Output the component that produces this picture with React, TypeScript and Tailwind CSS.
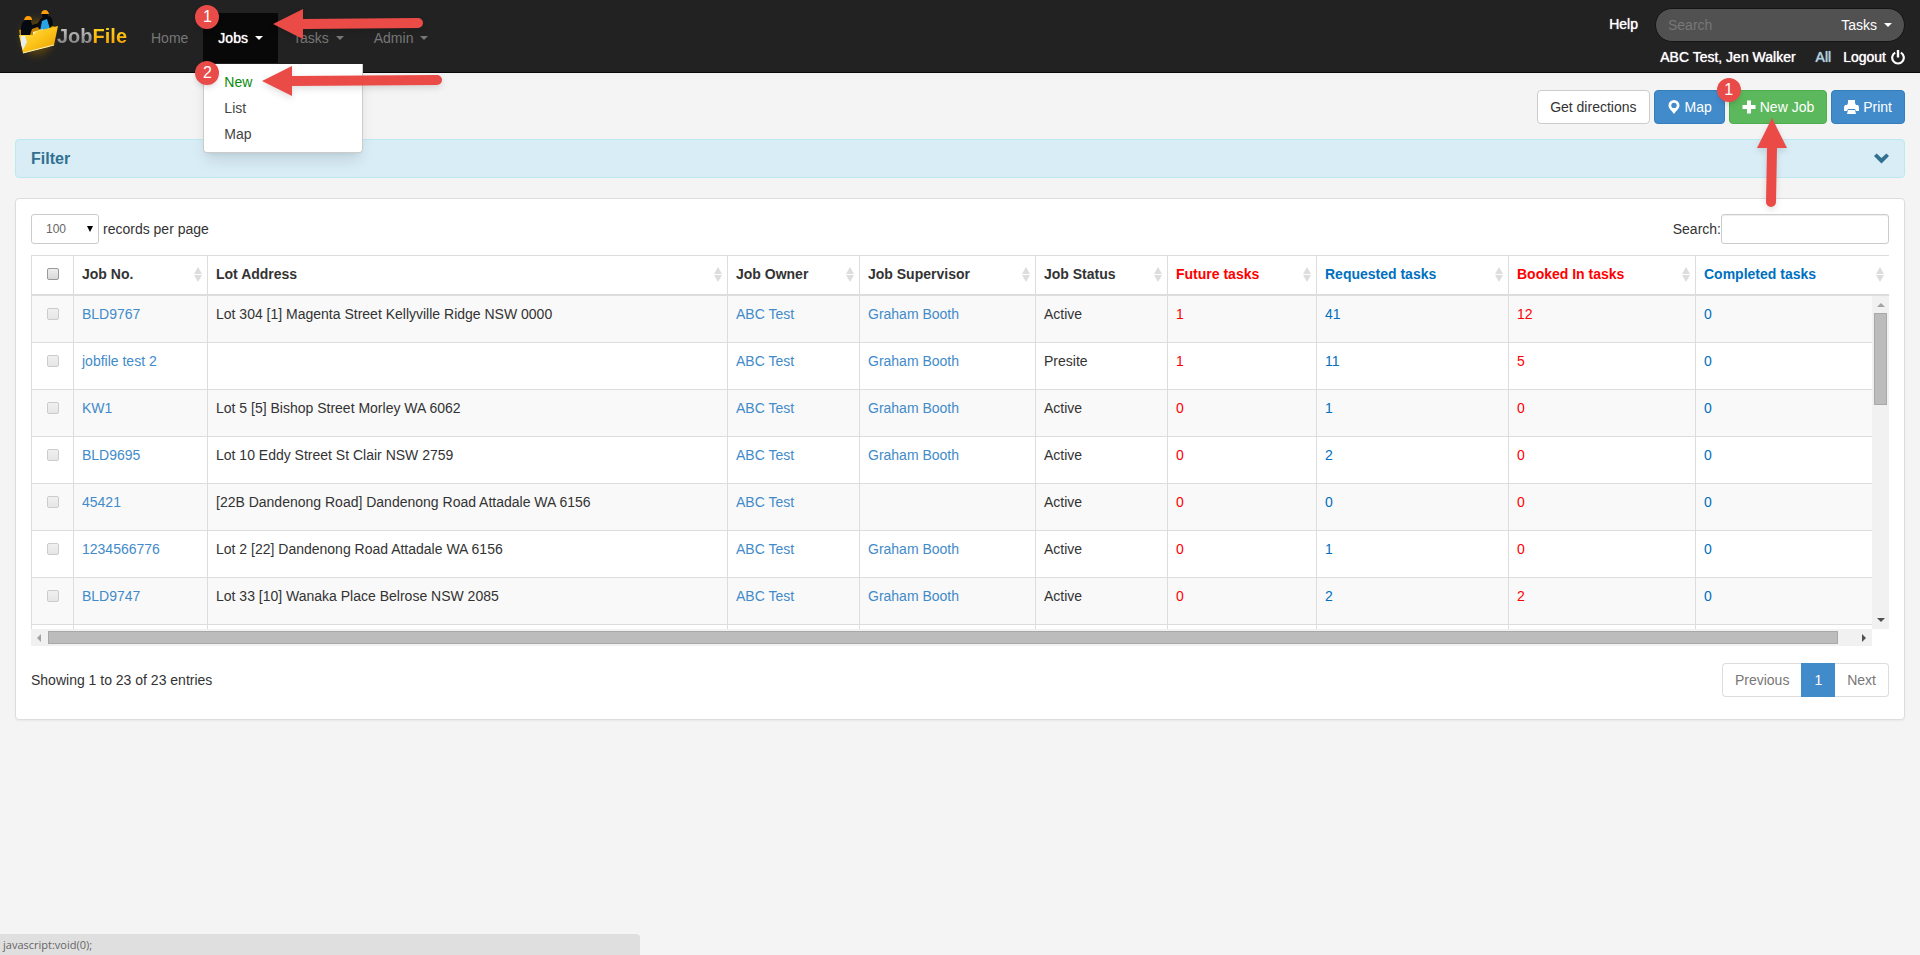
import React, { useState } from "react";

type Task = "future" | "requested" | "booked" | "completed";

interface Job {
  jobNo: string;
  address: string;
  owner: string;
  supervisor: string;
  status: string;
  tasks: Record<Task, number>;
}

const job = (
  jobNo: string,
  address: string,
  supervisor: string,
  status: string,
  counts: number[]
): Job => ({
  jobNo,
  address,
  owner: "ABC Test",
  supervisor,
  status,
  tasks: {
    future: counts[0],
    requested: counts[1],
    booked: counts[2],
    completed: counts[3],
  },
});

const jobs: Job[] = [
  job("BLD9767", "Lot 304 [1] Magenta Street Kellyville Ridge NSW 0000", "Graham Booth", "Active", [1, 41, 12, 0]),
  job("jobfile test 2", "", "Graham Booth", "Presite", [1, 11, 5, 0]),
  job("KW1", "Lot 5 [5] Bishop Street Morley WA 6062", "Graham Booth", "Active", [0, 1, 0, 0]),
  job("BLD9695", "Lot 10 Eddy Street St Clair NSW 2759", "Graham Booth", "Active", [0, 2, 0, 0]),
  job("45421", "[22B Dandenong Road] Dandenong Road Attadale WA 6156", "", "Active", [0, 0, 0, 0]),
  job("1234566776", "Lot 2 [22] Dandenong Road Attadale WA 6156", "Graham Booth", "Active", [0, 1, 0, 0]),
  job("BLD9747", "Lot 33 [10] Wanaka Place Belrose NSW 2085", "Graham Booth", "Active", [0, 2, 2, 0]),
];

const headers = [
  { label: "Job No.", color: "text-[#333]" },
  { label: "Lot Address", color: "text-[#333]" },
  { label: "Job Owner", color: "text-[#333]" },
  { label: "Job Supervisor", color: "text-[#333]" },
  { label: "Job Status", color: "text-[#333]" },
  { label: "Future tasks", color: "text-[#f00]" },
  { label: "Requested tasks", color: "text-[#0070c0]" },
  { label: "Booked In tasks", color: "text-[#f00]" },
  { label: "Completed tasks", color: "text-[#0070c0]" },
];

const Logo = () => (
  <a href="#" className="flex items-center" aria-label="JobFile home">
    <svg width="42" height="56" viewBox="0 0 42 56" className="overflow-visible" aria-hidden="true">
      <defs>
        <linearGradient id="folder" x1="0" y1="0" x2="1" y2="1">
          <stop offset="0" stopColor="#ffe45c" />
          <stop offset="0.5" stopColor="#fcc419" />
          <stop offset="1" stopColor="#e59a00" />
        </linearGradient>
        <radialGradient id="glow">
          <stop offset="0" stopColor="#c98a00" stopOpacity="0.75" />
          <stop offset="0.6" stopColor="#7a5500" stopOpacity="0.4" />
          <stop offset="1" stopColor="#222" stopOpacity="0" />
        </radialGradient>
      </defs>
      <ellipse cx="22" cy="29" rx="24" ry="27" fill="url(#glow)" />
      <path d="M4 22 L12 20 L39 18 L34 39 L8 44 Z" fill="#c98500" />
      <path d="M6 19 Q7 12 12 12 Q17 13 17 17 L24 15 L25 18 L17 21 L15 27 L6 27 Z" fill="#050a10" />
      <circle cx="13" cy="13" r="3" fill="#050a10" />
      <path d="M9 12 Q10 8 13 8 Q17 8 17 12 Z" fill="#ff9d0a" />
      <path d="M22 17 L26 10 L34 8 Q38 9 38 17 L35 20 L24 21 Z" fill="#050a10" />
      <path d="M27 13 L32 11 L35 21 L25 23 Z" fill="#27a3e8" />
      <circle cx="30" cy="7" r="3" fill="#050a10" />
      <path d="M26 6 Q27 2 30 2 Q33 2 34 6 Z" fill="#ff9d0a" />
      <path d="M18 24 L28 21 L30 24 L18 28 Z" fill="#fff3b0" />
      <path d="M4 27 L18 27 L22 23 L43 18 L39 37 L8 45 Z" fill="url(#folder)" />
      <path d="M8 45 L39 37" stroke="#fff6c0" strokeWidth="1" />
      <path d="M6 28 L10 28 L12 34 L8 42 L6 36 Z" fill="#e8edf0" />
    </svg>
    <span className="text-xl font-bold">
      <span className="bg-linear-to-b from-[#d0d0d0] to-[#777] bg-clip-text text-transparent">Job</span>
      <span className="bg-linear-to-b from-[#ffdc1e] to-[#f59a00] bg-clip-text text-transparent">File</span>
    </span>
  </a>
);

const Caret = () => (
  <span className="inline-block border-x-4 border-t-4 border-x-transparent border-t-current" />
);

const PinIcon = () => (
  <svg width="14" height="14" viewBox="0 0 14 14" fill="currentColor" aria-hidden="true">
    <path
      fillRule="evenodd"
      d="M7 0a5.500 5.500 0 0 1 5.500 5.500C12.500 8.500 9.500 10.500 7 14 4.500 10.500 1.500 8.500 1.500 5.500A5.500 5.500 0 0 1 7 0Zm0 2.700a2.700 2.700 0 1 0 0 5.400 2.700 2.700 0 0 0 0-5.400Z"
    />
  </svg>
);

const PlusIcon = () => (
  <svg width="14" height="14" viewBox="0 0 14 14" fill="currentColor" aria-hidden="true">
    <path d="M5 .5h4V5h4.500v4H9v4.500H5V9H.5V5H5z" />
  </svg>
);

const PrintIcon = () => (
  <svg width="15" height="14" viewBox="0 0 15 14" fill="currentColor" aria-hidden="true">
    <path d="M4 0h7v3l1 2h2l1 2v4h-3l-1-2H4l-1 2H0V7l1-2h2l1-2z" />
    <path d="M4 10h7l1 4H3z" />
  </svg>
);

const PowerIcon = () => (
  <svg width="14" height="15" viewBox="0 0 14 15" fill="none" stroke="currentColor" aria-hidden="true">
    <path d="M4.200 2.600a5.800 5.800 0 1 0 5.600 0" strokeWidth="2.200" />
    <path d="M7 0v7.500" strokeWidth="2.400" />
  </svg>
);

const ChevronIcon = () => (
  <svg width="15" height="11" viewBox="0 0 15 11" fill="currentColor" aria-hidden="true">
    <path d="M0 3 2.600.4 7.500 5 12.400.4 15 3 7.500 10.600Z" />
  </svg>
);

const SortIcon = () => (
  <svg width="8" height="15" viewBox="0 0 8 15" fill="#ddd" aria-hidden="true">
    <path d="M4 0 8 7H0zM4 15 0 8h8z" />
  </svg>
);

const Badge = ({ children, className }: { children: React.ReactNode; className: string }) => (
  <span
    className={`absolute z-30 flex size-6 items-center justify-center rounded-full bg-[#e94b48] text-base text-white shadow-md ${className}`}
  >
    {children}
  </span>
);

const LeftArrow = ({ length, className }: { length: number; className: string }) => (
  <svg
    width={length}
    height="32"
    viewBox={`0 0 ${length} 32`}
    fill="#eb4b46"
    className={`pointer-events-none absolute z-30 overflow-visible drop-shadow-md ${className}`}
    aria-hidden="true"
  >
    <path d={`M0 16 L30 1 V11 L${length - 5} 10 a5 5 0 0 1 0 10 L30 21 V31 Z`} />
  </svg>
);

const UpArrow = () => (
  <svg
    width="30"
    height="89"
    viewBox="0 0 30 89"
    fill="#eb4b46"
    className="pointer-events-none absolute top-7 left-7 z-30 overflow-visible drop-shadow-md"
    aria-hidden="true"
  >
    <path d="M15 0 L30 30 H20 L19 84 a5 5 0 0 1 -10 0 L10 30 H0 Z" />
  </svg>
);

const CheckBox = ({ label, faded }: { label: string; faded?: boolean }) => (
  <input
    type="checkbox"
    aria-label={label}
    className={`mx-auto block size-3 appearance-none rounded-xs border bg-linear-to-b checked:bg-[#428bca] ${
      faded ? "border-[#ccc] from-[#f0f0f0] to-[#e6e6e6]" : "border-[#999] from-[#eee] to-[#d8d8d8]"
    }`}
  />
);

// lot address takes whatever is left over
const Columns = ({ lastColumn }: { lastColumn: string }) => (
  <colgroup>
    <col className="w-[41px]" />
    <col className="w-[134px]" />
    <col />
    <col className="w-[132px]" />
    <col className="w-[176px]" />
    <col className="w-[132px]" />
    <col className="w-[149px]" />
    <col className="w-[192px]" />
    <col className="w-[187px]" />
    <col className={lastColumn} />
  </colgroup>
);

const NavBar = () => {
  const [search, setSearch] = useState<string>("");

  return (
    <header className="flex h-[73px] justify-between border-b border-[#090909] bg-[#222] px-[15px]">
      <div className="flex">
        <div className="flex w-[121px] items-start pt-2">
          <Logo />
        </div>
        <nav className="flex pt-[13px] text-[#777]">
          <a href="#" className="flex h-[50px] items-center px-[15px]">
            Home
          </a>
          <div className="relative">
            <button className="flex h-[50px] items-center gap-[7px] bg-[#080808] px-[15px] text-white [text-shadow:0_0_1px_#fff]">
              Jobs <Caret />
            </button>
            <div className="absolute top-[51px] left-0 z-20 flex w-40 flex-col rounded-b border border-t-0 border-black/20 bg-white py-[5px] text-[#444] shadow-lg">
              <a href="#" className="px-5 py-[3px] text-[#0a8a0a]">
                New
              </a>
              <a href="#" className="px-5 py-[3px]">
                List
              </a>
              <a href="#" className="px-5 py-[3px]">
                Map
              </a>
            </div>
            <Badge className="-top-2 -left-2">1</Badge>
            <Badge className="top-12 -left-2">2</Badge>
            <LeftArrow length={150} className="-top-[5px] left-[70px]" />
            <LeftArrow length={180} className="top-[52px] left-[59px]" />
          </div>
          <button className="flex h-[50px] items-center gap-[7px] px-[15px]">
            Tasks <Caret />
          </button>
          <button className="flex h-[50px] items-center gap-[7px] px-[15px]">
            Admin <Caret />
          </button>
        </nav>
      </div>

      <div className="flex flex-col items-end pt-2 text-white [text-shadow:0_0_1px_#fff]">
        <div className="flex items-start gap-[17px]">
          <a href="#" className="pt-1.5">
            Help
          </a>
          <div className="flex h-[34px] w-[250px] items-center justify-between rounded-full border border-[#151515] bg-[#515151] px-3">
            <input
              type="text"
              aria-label="Search"
              placeholder="Search"
              className="w-36 bg-transparent outline-none placeholder:text-[#777] [text-shadow:none]"
              value={search}
              onChange={(e) => setSearch(e.target.value)}
            />
            <button className="flex items-center gap-[7px]">
              Tasks <Caret />
            </button>
          </div>
        </div>
        <div className="flex items-center pt-[5px]">
          <span>ABC Test, Jen Walker</span>
          <a href="#" className="ml-5 text-[#9fd3e0]">
            All
          </a>
          <a href="#" className="ml-3 flex items-center gap-[5px]">
            Logout <PowerIcon />
          </a>
        </div>
      </div>
    </header>
  );
};

const TaskCount = ({ value, color }: { value: number; color: string }) => (
  <td className={`border-l border-[#ddd] px-2 pt-2 align-top ${color}`}>{value}</td>
);

const JobsTable = () => (
  <div className="mt-[11px]">
    <table className="w-full table-fixed border-separate border-spacing-0 border-t border-l border-[#ddd]">
      <Columns lastColumn="w-[194px]" />
      <thead>
        <tr className="h-10">
          <th className="border-b-2 border-[#ddd] pb-0.5">
            <CheckBox label="Select all jobs" />
          </th>
          {headers.map((ele) => (
            <th
              key={ele.label}
              className={`border-b-2 border-l border-[#ddd] pr-[5px] pb-0.5 pl-2 text-left ${ele.color}`}
            >
              <div className="flex items-center justify-between">
                <span>{ele.label}</span>
                <SortIcon />
              </div>
            </th>
          ))}
        </tr>
      </thead>
    </table>

    <div className="flex h-[333px]">
      <div className="min-w-0 flex-1 overflow-hidden">
        <table className="w-full table-fixed border-separate border-spacing-0 border-l border-[#ddd]">
          <Columns lastColumn="w-[177px]" />
          <tbody>
            {jobs.map((ele) => (
              <tr key={ele.jobNo} className="h-[47px] odd:bg-[#f9f9f9] [&>td]:border-b">
                <td className="border-[#ddd] pt-3 align-top">
                  <CheckBox label={`Select ${ele.jobNo}`} faded />
                </td>
                <td className="border-l border-[#ddd] px-2 pt-2 align-top">
                  <a href="#" className="text-[#428bca]">
                    {ele.jobNo}
                  </a>
                </td>
                <td className="border-l border-[#ddd] px-2 pt-2 align-top">{ele.address}</td>
                <td className="border-l border-[#ddd] px-2 pt-2 align-top">
                  <a href="#" className="text-[#428bca]">
                    {ele.owner}
                  </a>
                </td>
                <td className="border-l border-[#ddd] px-2 pt-2 align-top">
                  <a href="#" className="text-[#428bca]">
                    {ele.supervisor}
                  </a>
                </td>
                <td className="border-l border-[#ddd] px-2 pt-2 align-top">{ele.status}</td>
                <TaskCount value={ele.tasks.future} color="text-[#f00]" />
                <TaskCount value={ele.tasks.requested} color="text-[#0070c0]" />
                <TaskCount value={ele.tasks.booked} color="text-[#f00]" />
                <TaskCount value={ele.tasks.completed} color="text-[#0070c0]" />
              </tr>
            ))}
            <tr className="h-[47px]">
              <td />
              {headers.map((ele) => (
                <td key={ele.label} className="border-l border-[#ddd]" />
              ))}
            </tr>
          </tbody>
        </table>
      </div>
      <div className="flex w-[17px] flex-col items-center justify-between bg-[#f1f1f1] py-[7px]">
        <div className="flex flex-col items-center gap-1.5">
          <span className="border-x-4 border-b-4 border-x-transparent border-b-[#a3a3a3]" />
          <span className="h-[92px] w-[13px] border border-[#a8a8a8] bg-[#bcbcbc]" />
        </div>
        <span className="border-x-4 border-t-4 border-x-transparent border-t-[#505050]" />
      </div>
    </div>

    <div className="mr-[17px] flex h-[17px] items-center bg-[#f1f1f1] px-1.5">
      <span className="border-y-4 border-r-4 border-y-transparent border-r-[#a3a3a3]" />
      <span className="ml-[7px] h-[13px] flex-1 border border-[#a8a8a8] bg-[#bcbcbc]" />
      <span className="ml-6 border-y-4 border-l-4 border-y-transparent border-l-[#505050]" />
    </div>
  </div>
);

const App = () => {
  const [pageSize, setPageSize] = useState<string>("100");
  const [filterText, setFilterText] = useState<string>("");

  return (
    <div className="min-h-screen bg-[#f4f4f4] font-['Liberation_Sans',Arial,sans-serif] text-sm text-[#333]">
      <NavBar />
      <main className="px-[15px] pt-[17px]">
        <div className="flex justify-end gap-1 text-white">
          <button className="h-[34px] rounded border border-[#ccc] bg-white px-3 text-[#333]">
            Get directions
          </button>
          <button className="flex h-[34px] items-center gap-1 rounded border border-[#357ebd] bg-[#428bca] px-3">
            <PinIcon /> Map
          </button>
          <div className="relative">
            <button className="flex h-[34px] items-center gap-1 rounded border border-[#4cae4c] bg-[#5cb85c] px-3">
              <PlusIcon /> New Job
            </button>
            <Badge className="-top-3 -left-3">1</Badge>
            <UpArrow />
          </div>
          <button className="flex h-[34px] items-center gap-1 rounded border border-[#357ebd] bg-[#428bca] px-3">
            <PrintIcon /> Print
          </button>
        </div>

        <button className="mt-[15px] flex h-[39px] w-full items-center justify-between rounded border border-[#bce8f1] bg-[#d9edf7] px-[15px] text-base font-bold text-[#31708f]">
          Filter <ChevronIcon />
        </button>

        <section className="mt-5 rounded border border-[#ddd] bg-white px-[15px] pt-[15px] pb-[22px] shadow-xs">
          <div className="flex justify-between">
            <label className="flex items-center gap-1">
              <span className="relative">
                <select
                  className="h-[30px] w-[68px] appearance-none rounded-[3px] border border-[#ccc] bg-white pl-3.5 text-xs text-[#666]"
                  value={pageSize}
                  onChange={(e) => setPageSize(e.target.value)}
                >
                  <option>25</option>
                  <option>50</option>
                  <option>100</option>
                </select>
                <span className="pointer-events-none absolute top-3 right-1.5 border-x-[3px] border-t-[6px] border-x-transparent border-t-black" />
              </span>
              records per page
            </label>
            <label className="flex items-center">
              Search:
              <input
                type="text"
                className="h-[30px] w-[168px] rounded-[3px] border border-[#ccc] bg-white px-2 shadow-[inset_0_1px_1px_rgba(0,0,0,0.075)] outline-none"
                value={filterText}
                onChange={(e) => setFilterText(e.target.value)}
              />
            </label>
          </div>

          <JobsTable />

          <div className="mt-[17px] flex items-center justify-between">
            <p>Showing 1 to 23 of 23 entries</p>
            <div className="flex h-[34px] text-[#777]">
              <button className="rounded-l border border-r-0 border-[#ddd] px-3">Previous</button>
              <button className="bg-[#428bca] px-[13px] text-white">1</button>
              <button className="rounded-r border border-l-0 border-[#ddd] px-3">Next</button>
            </div>
          </div>
        </section>
      </main>

      <div className="fixed bottom-0 left-0 h-[21px] w-1/3 rounded-tr bg-[#dfdfdf] px-[3px] font-['Open_Sans',sans-serif] text-[11px] leading-[22px] text-[#666]">
        javascript:void(0);
      </div>
    </div>
  );
};

export default App;
